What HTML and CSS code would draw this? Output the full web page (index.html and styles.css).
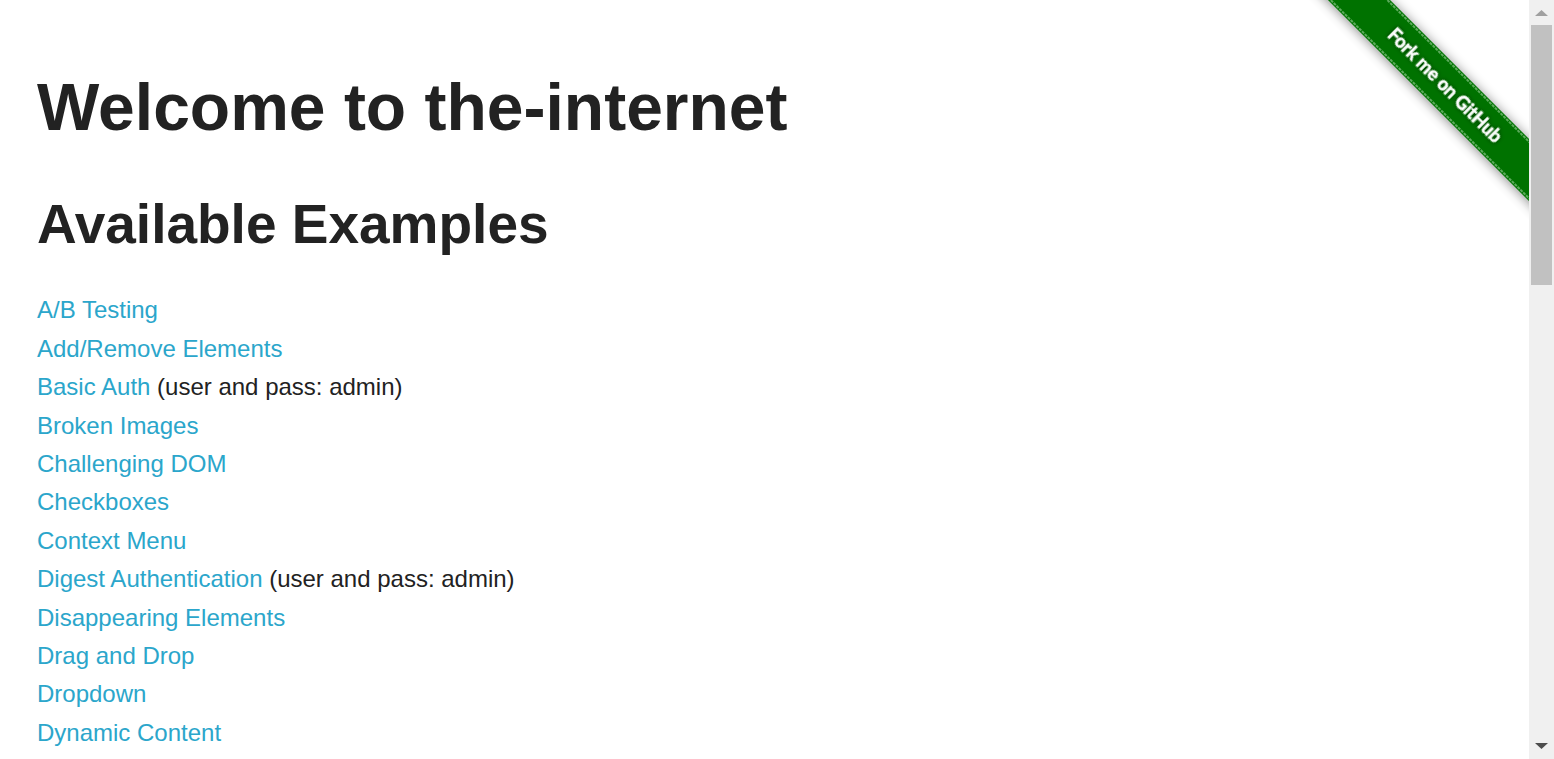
FILE: index.html
```html
<!DOCTYPE html>
<html lang="en">
<head>
<meta charset="utf-8">
<title>The Internet</title>
<link rel="stylesheet" href="styles.css">
</head>
<body>
<div class="viewport">
  <div class="page">
    <a class="ribbon" href="#github" aria-label="Fork me on GitHub">
      <svg class="ribbon-art" viewBox="0 0 224 224">
        <defs>
          <filter id="band-shadow" x="-10%" y="-100%" width="120%" height="300%">
            <feDropShadow dx="0" dy="1" stdDeviation="6" flood-color="#000" flood-opacity="0.45"/>
          </filter>
          <filter id="text-shadow" x="-10%" y="-50%" width="120%" height="200%">
            <feDropShadow dx="0" dy="0" stdDeviation="2" flood-color="#000" flood-opacity="0.6"/>
          </filter>
        </defs>
        <g transform="translate(139 85) rotate(45)">
          <rect x="-200" y="-22" width="400" height="44" fill="#007200" filter="url(#band-shadow)"/>
          <path class="stitch" d="M-200 -20H200M-200 20H200"/>
          <text class="ribbon-text" x="1" y="6" filter="url(#text-shadow)">Fork me on GitHub</text>
        </g>
      </svg>
    </a>
    <main class="content">
      <h1 class="title">Welcome to the-internet</h1>
      <h2 class="subtitle">Available Examples</h2>
      <ul class="examples">
        <li><a href="#abtest">A/B Testing</a></li>
        <li><a href="#add-remove">Add/Remove Elements</a></li>
        <li><a href="#basic-auth">Basic Auth</a> (user and pass: admin)</li>
        <li><a href="#broken-images">Broken Images</a></li>
        <li><a href="#challenging-dom">Challenging DOM</a></li>
        <li><a href="#checkboxes">Checkboxes</a></li>
        <li><a href="#context-menu">Context Menu</a></li>
        <li><a href="#digest-auth">Digest Authentication</a> (user and pass: admin)</li>
        <li><a href="#disappearing">Disappearing Elements</a></li>
        <li><a href="#drag-and-drop">Drag and Drop</a></li>
        <li><a href="#dropdown">Dropdown</a></li>
        <li><a href="#dynamic-content">Dynamic Content</a></li>
      </ul>
    </main>
  </div>
  <div class="scrollbar" aria-hidden="true">
    <svg class="arrow arrow-up" viewBox="0 0 25 25"><path d="M6 16L12.500 10L19 16Z"/></svg>
    <div class="track"><div class="thumb"></div></div>
    <svg class="arrow arrow-down" viewBox="0 0 25 25"><path d="M6 9L12.500 15L19 9Z"/></svg>
  </div>
</div>
</body>
</html>
```
FILE: styles.css
```css
* {
  box-sizing: border-box;
}

body {
  margin: 0;
  background: #fff;
  color: #222;
  font-family: "Liberation Sans", Arial, sans-serif;
  font-size: 24px;
  line-height: 1.6;
}

.viewport {
  display: flex;
  height: 100vh;
  overflow: hidden;
}

.page {
  position: relative;
  flex: 1;
  min-width: 0;
  overflow: hidden;
}

.content {
  padding: 61px 37px 0;
}

.title,
.subtitle {
  margin: 0;
  font-weight: bold;
  line-height: 1.4;
}

.title {
  font-size: 66px;
}

.subtitle {
  margin-top: 33px;
  font-size: 55px;
}

.examples {
  margin: 28px 0 0;
  padding: 0;
  list-style: none;
}

.examples a {
  color: #2ba6cb;
  text-decoration: none;
}

.ribbon {
  position: absolute;
  top: 0;
  right: 0;
  width: 224px;
  height: 224px;
}

.ribbon-art {
  display: block;
  width: 100%;
  height: 100%;
}

.stitch {
  fill: none;
  stroke: #5cab5c;
  stroke-width: 2;
  stroke-dasharray: 3 1;
}

.ribbon-text {
  fill: #fff;
  stroke: #fff;
  stroke-width: 0.4;
  font-family: Lato, "Open Sans", sans-serif;
  font-size: 18px;
  font-weight: 700;
  text-anchor: middle;
}

.scrollbar {
  display: flex;
  flex-direction: column;
  width: 25px;
  background: #f0f0f0;
}

.arrow {
  width: 25px;
  height: 25px;
}

.arrow-up {
  fill: #a0a0a0;
}

.arrow-down {
  fill: #4d4d4d;
}

.track {
  flex: 1;
  padding: 0 2px;
}

.thumb {
  height: 260px;
  background: #c1c1c1;
}
```
